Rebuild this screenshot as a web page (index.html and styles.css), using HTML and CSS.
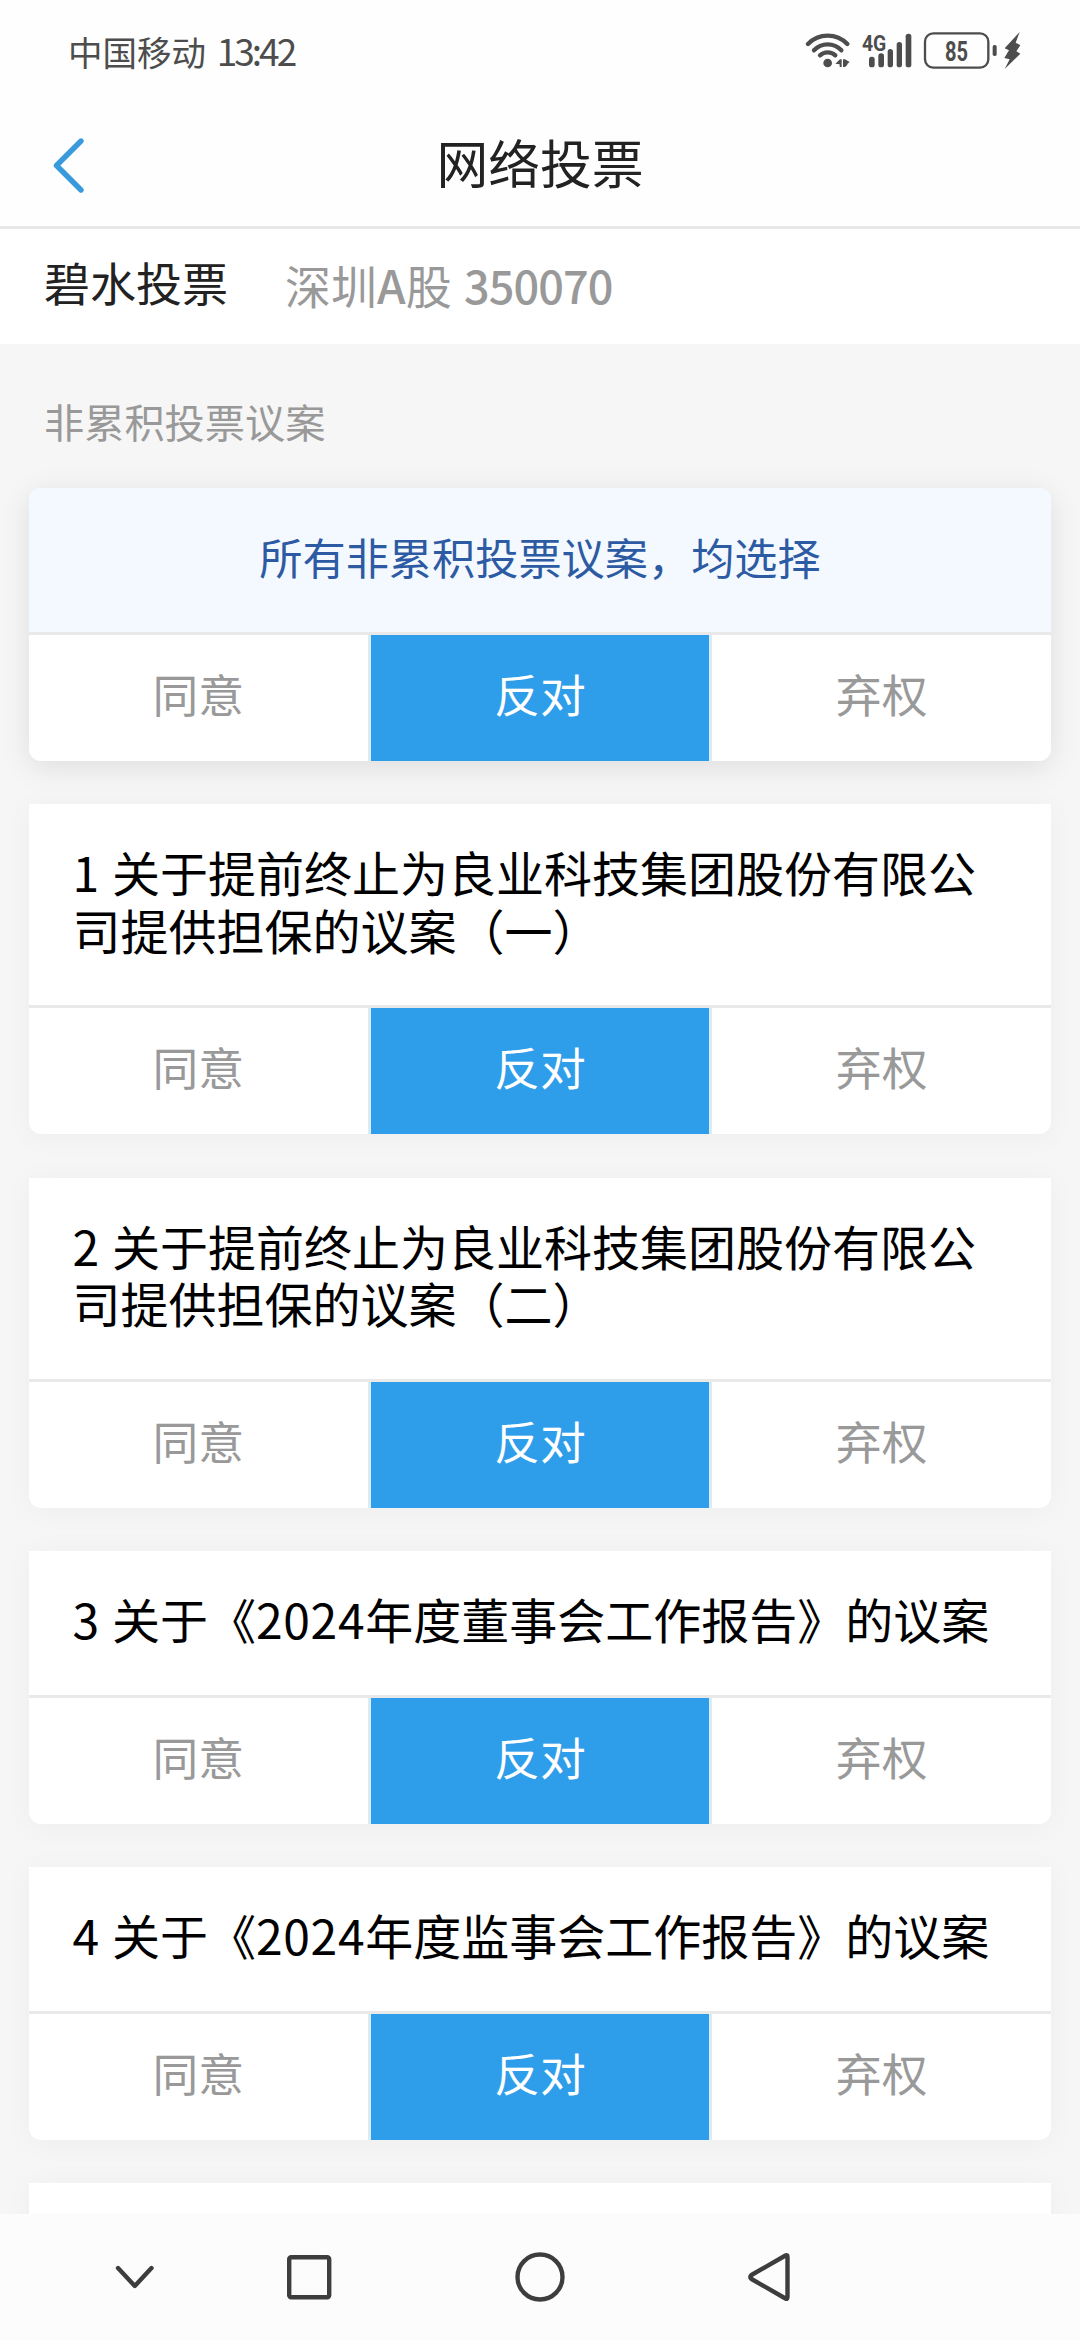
FILE: index.html
```html
<!DOCTYPE html>
<html lang="zh-CN">
<head>
    <meta charset="UTF-8">
    <title>网络投票</title>
    <link rel="stylesheet" href="styles.css">
</head>
<body>

<div class="status-bar">
    <div class="carrier">中国移动 <span class="clock">13:42</span></div>
    <svg class="status-icons" viewBox="76 60 648 120">
        <!-- wifi -->
        <g fill="none" stroke="#4d4d4d" stroke-width="13" stroke-linecap="round">
            <path d="M85 102A82 82 0 0 1 203 102"/>
            <path d="M103 121A56 56 0 0 1 185 121"/>
            <path d="M121 136A34 34 0 0 1 167 136"/>
        </g>
        <circle cx="144" cy="159" r="13"/>
        <path d="M167 161L181 148H186V171H180V163ZM190 148H196L210 156L203 162V165L196 171H190Z"/>
        <!-- 信号 -->
        <text class="net" x="247" y="122" textLength="73" lengthAdjust="spacingAndGlyphs">4G</text>
        <rect x="268" y="140" width="17" height="32" rx="8"/>
        <rect x="296" y="130" width="17" height="42" rx="8"/>
        <rect x="324" y="117" width="16" height="55" rx="8"/>
        <rect x="351" y="96" width="16" height="76" rx="8"/>
        <rect x="378" y="71" width="17" height="101" rx="8"/>
        <!-- 电池 -->
        <rect x="436" y="70" width="190" height="103" rx="25" fill="none" stroke="#4d4d4d" stroke-width="7"/>
        <rect x="639" y="105" width="12" height="33" rx="5"/>
        <text class="level" x="496" y="153" textLength="69" lengthAdjust="spacingAndGlyphs">85</text>
        <path d="M720 66L675 115L688 121L674 144L690 148L675 177L722 131L710 124L722 106L708 98Z"/>
    </svg>
</div>

<header class="app-header">
    <svg class="back" viewBox="0 0 31 55" fill="none">
        <path d="M28 3L3.500 27.500L28 52"/>
    </svg>
    <h1>网络投票</h1>
</header>

<div class="stock">
    <span class="stock-name">碧水投票</span>
    <span class="stock-code">深圳<b>A</b>股 <b class="num">350070</b></span>
</div>

<main>
    <h2>非累积投票议案</h2>

    <section class="card card-all">
        <div class="all-title">所有非累积投票议案，均选择</div>
        <div class="options">
            <div class="option">同意</div>
            <div class="option active">反对</div>
            <div class="option">弃权</div>
        </div>
    </section>

    <section class="card">
        <div class="title">1 关于提前终止为良业科技集团股份有限公司提供担保的议案（一）</div>
        <div class="options">
            <div class="option">同意</div>
            <div class="option active">反对</div>
            <div class="option">弃权</div>
        </div>
    </section>

    <section class="card">
        <div class="title">2 关于提前终止为良业科技集团股份有限公司提供担保的议案（二）</div>
        <div class="options">
            <div class="option">同意</div>
            <div class="option active">反对</div>
            <div class="option">弃权</div>
        </div>
    </section>

    <section class="card">
        <div class="title">3 关于《<span class="year">2024</span>年度董事会工作报告》的议案</div>
        <div class="options">
            <div class="option">同意</div>
            <div class="option active">反对</div>
            <div class="option">弃权</div>
        </div>
    </section>

    <section class="card">
        <div class="title">4 关于《<span class="year">2024</span>年度监事会工作报告》的议案</div>
        <div class="options">
            <div class="option">同意</div>
            <div class="option active">反对</div>
            <div class="option">弃权</div>
        </div>
    </section>

    <section class="card card-next"></section>
</main>

<nav class="nav-bar">
    <svg viewBox="0 0 50 50"><path d="M8 16L24.800 34L41.500 16"/></svg>
    <svg viewBox="0 0 50 50"><rect x="5.200" y="5.200" width="40" height="40" rx="2"/></svg>
    <svg viewBox="0 0 50 50"><circle cx="25" cy="25" r="22.500"/></svg>
    <svg viewBox="0 0 50 50"><path d="M41.500 3.500Q43.500 2.500 43.500 5V45Q43.500 47.500 41.500 46.500L7.500 27Q5 25 7.500 23Z"/></svg>
</nav>

</body>
</html>
```
FILE: styles.css
```css
* {
    box-sizing: border-box;
}
body {
    margin: 0;
    height: 2340px;
    display: flex;
    flex-direction: column;
    overflow: hidden;
    font-family: "Noto Sans CJK SC", sans-serif;
    background: #f6f6f6;
    color: #222;
}

/* 状态栏 */
.status-bar {
    height: 100px;
    padding: 0 59px 0 68px;
    display: flex;
    align-items: center;
    justify-content: space-between;
    background: #fefefe;
}
.carrier {
    font-size: 34.5px;
    color: #4d4d4d;
    white-space: nowrap;
}
.clock {
    margin-left: 3px;
    font-size: 37px;
    letter-spacing: -3px;
}
.status-icons {
    width: 216px;
    height: 40px;
    fill: #4d4d4d;
}
.status-icons text {
    font-family: Roboto, sans-serif;
    font-weight: 700;
}
.net {
    font-size: 68px;
}
.level {
    font-size: 85px;
}

/* 标题栏 */
.app-header {
    height: 129px;
    padding: 0 53px;
    display: grid;
    grid-template-columns: 100px 1fr 100px;
    align-items: center;
    background: #fefefe;
    border-bottom: 3px solid #e8e8e8;
}
.back {
    width: 31px;
    height: 55px;
    margin-top: 4px;
    stroke: #3a9bdc;
    stroke-width: 5.4;
    stroke-linecap: round;
    stroke-linejoin: round;
}
h1 {
    margin: 0;
    padding-bottom: 4px;
    font-size: 51.8px;
    font-weight: 400;
    text-align: center;
}
.stock {
    height: 115px;
    padding-left: 44px;
    display: flex;
    align-items: center;
    gap: 57px;
    background: #fff;
}
.stock-name {
    padding-bottom: 12px;
    font-size: 46px;
}
.stock-code {
    padding-bottom: 5px;
    font-size: 46px;
    color: #999;
}
.stock-code b {
    font-weight: 500;
}
.stock-code .num {
    margin-left: 2px;
    font-size: 45px;
    letter-spacing: -0.9px;
}

/* 议案列表 */
main {
    flex: 1;
    min-height: 0;
    padding: 0 29px;
    overflow: hidden;
}
h2 {
    height: 144px;
    margin: 0;
    padding: 8px 15px 0;
    font-size: 40.2px;
    font-weight: 400;
    line-height: 137px;
    color: #999;
}
.card {
    margin-bottom: 43.5px;
    border-radius: 0 0 12px 12px;
    background: #fff;
    box-shadow: 0 3px 30px rgba(0, 0, 0, 0.04);
    overflow: hidden;
}
.card-all {
    margin-bottom: 43px;
    border-radius: 12px;
    box-shadow: 0 6px 30px rgba(0, 0, 0, 0.1);
}
.all-title {
    height: 144px;
    padding-bottom: 9px;
    font-size: 43.2px;
    line-height: 136px;
    text-align: center;
    color: #2c5ba3;
    background: #f4f8ff;
}
.title {
    padding: 39px 30px 47px 43.5px;
    font-size: 48px;
    line-height: 57.5px;
    word-spacing: 2px;
    color: #000;
}
.year {
    letter-spacing: 0.7px;
}
.options {
    display: grid;
    grid-template-columns: repeat(3, 1fr);
    gap: 3px;
    border-top: 3px solid #e9e9e9;
    background: #dcebf4;
}
.option {
    height: 126px;
    padding-bottom: 9px;
    font-size: 45.8px;
    line-height: 117px;
    text-align: center;
    color: #999;
    background: #fff;
}
.option.active {
    color: #fff;
    background: #2f9eea;
}
.card-next {
    height: 273px;
}

/* 导航键 */
.nav-bar {
    height: 126px;
    padding-left: 110px;
    display: grid;
    grid-template-columns: 174px 231px 229px 50px;
    align-items: center;
    background: #fcfcfc;
}
.nav-bar svg {
    width: 50px;
    height: 50px;
    fill: none;
    stroke: #3d3d3d;
    stroke-width: 4.4;
    stroke-linecap: round;
    stroke-linejoin: round;
}
```
